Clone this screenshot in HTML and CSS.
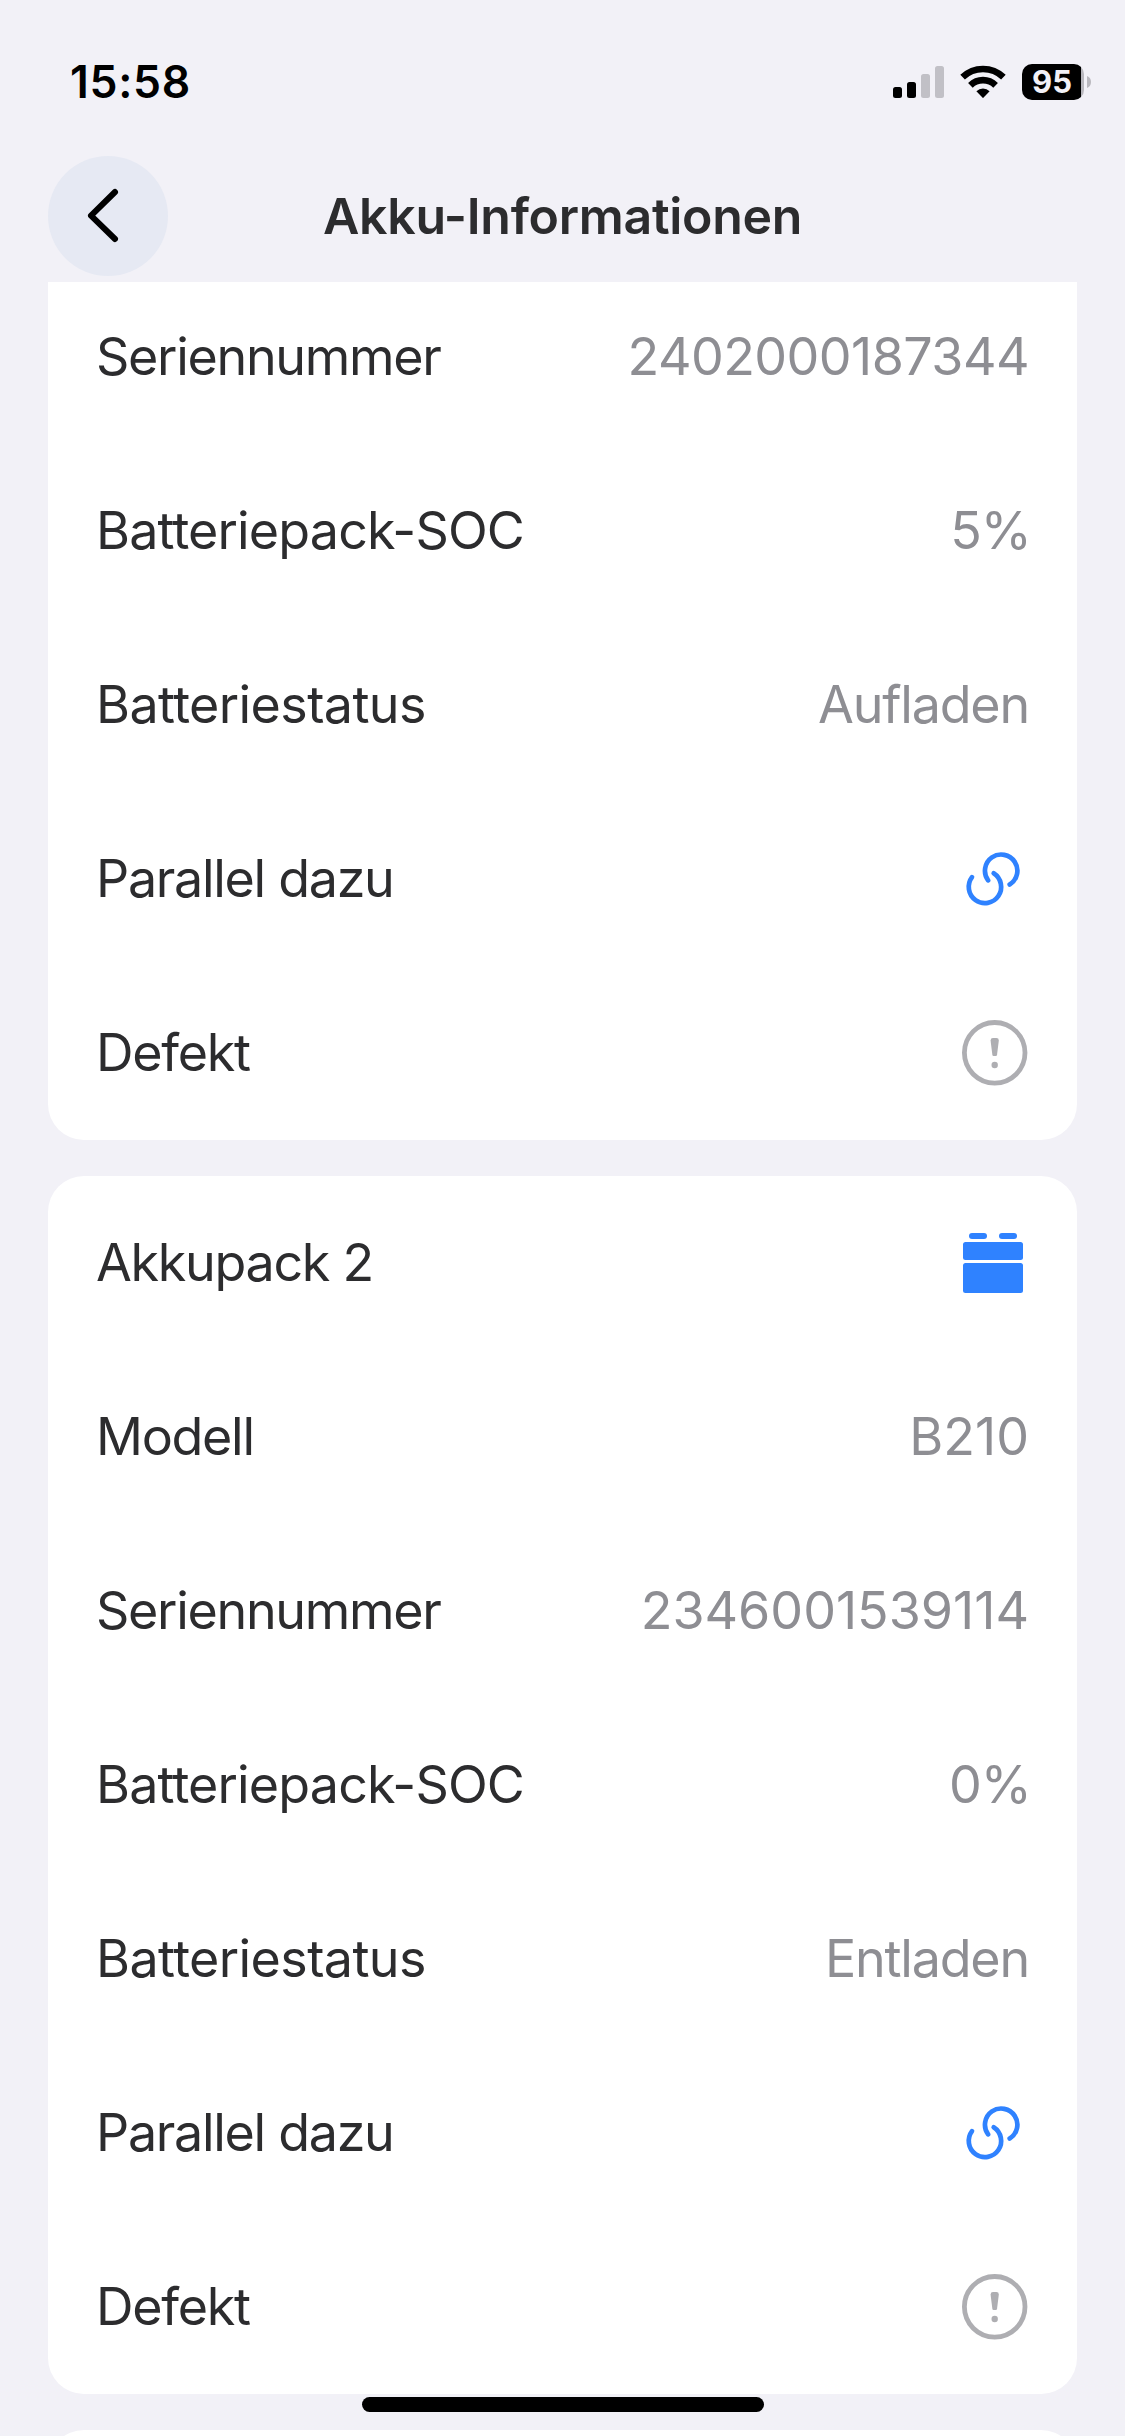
FILE: index.html
```html
<!DOCTYPE html>
<html lang="de">
<head>
<meta charset="utf-8">
<title>Akku-Informationen</title>
<link rel="stylesheet" href="styles.css">
</head>
<body>
<svg width="0" height="0" class="defs" aria-hidden="true">
  <symbol id="link" viewBox="0 0 72 72">
    <g fill="none" stroke="#2f82ff" stroke-width="4.7" stroke-linecap="round">
      <path d="M31.1 37.3A16.2 16.2 0 1 1 52.7 41.5"/>
      <path d="M15 34.2A16.2 16.2 0 1 0 36.7 30.3"/>
    </g>
  </symbol>
  <symbol id="warn" viewBox="0 0 72 72">
    <circle cx="37.7" cy="35.8" r="30.3" fill="none" stroke="#aeaeb2" stroke-width="4.8"/>
    <path d="M33.6 23.4Q33.6 21 36 21h3.4q2.4 0 2.4 2.4l-1.7 14q-.2 1.6-1.3 1.6h-2.2q-1.1 0-1.3-1.6z" fill="#aeaeb2"/>
    <circle cx="37.7" cy="48" r="3.2" fill="#aeaeb2"/>
  </symbol>
  <symbol id="pack" viewBox="0 0 72 72">
    <g fill="#2f82ff">
      <rect x="12" y="6" width="18" height="6" rx="3"/>
      <rect x="42" y="6" width="18" height="6" rx="3"/>
      <rect x="6" y="15" width="60" height="18" rx="2.5"/>
      <rect x="6" y="36" width="60" height="30" rx="2.5"/>
    </g>
  </symbol>
</svg>
<div class="screen">
  <header class="top">
    <div class="status">
      <span class="time">15:58</span>
      <div class="indicators">
        <svg class="signal" width="51" height="32" viewBox="0 0 51 32">
          <rect x="0" y="21" width="9" height="11" rx="2.5"/>
          <rect x="14" y="16" width="9" height="16" rx="2.5"/>
          <rect x="28" y="8" width="9" height="24" rx="2.5" fill="#c1c0c6"/>
          <rect x="42" y="0" width="9" height="32" rx="2.5" fill="#c1c0c6"/>
        </svg>
        <svg class="wifi" width="46" height="34" viewBox="0 0 46 34">
          <g fill="none" stroke="#000" stroke-width="6.6">
            <path d="M2.6 12.2A29.5 29.5 0 0 1 43.4 12.2"/>
            <path d="M10.4 20.3A18 18 0 0 1 35.6 20.3"/>
          </g>
          <path d="M16.4 26.2a9.5 9.5 0 0 1 13.2 0L23.6 32.6q-.6.6-1.2 0z"/>
        </svg>
        <div class="battery"><span class="level">95</span></div>
        <svg class="nub" width="4" height="12" viewBox="0 0 4 12"><path d="M0 0Q4 1.500 4 6T0 12z" fill="#b9b8be"/></svg>
      </div>
    </div>
    <div class="nav">
      <div class="back">
        <svg width="120" height="120" viewBox="0 0 120 120"><path d="M67 36L43 59.7L67 83" fill="none" stroke="#000" stroke-width="6" stroke-linecap="round" stroke-linejoin="round"/></svg>
      </div>
      <h1 class="title">Akku-Informationen</h1>
    </div>
  </header>
  <main class="content">
    <section class="card card-cont">
      <div class="row"><span class="label">Seriennummer</span><span class="value serial">2402000187344</span></div>
      <div class="row"><span class="label soc">Batteriepack-SOC</span><span class="value percent">5%</span></div>
      <div class="row"><span class="label state">Batteriestatus</span><span class="value word">Aufladen</span></div>
      <div class="row"><span class="label">Parallel dazu</span><svg class="icon"><use href="#link"/></svg></div>
      <div class="row"><span class="label">Defekt</span><svg class="icon"><use href="#warn"/></svg></div>
    </section>
    <section class="card">
      <div class="row"><span class="label">Akkupack 2</span><svg class="icon"><use href="#pack"/></svg></div>
      <div class="row"><span class="label">Modell</span><span class="value">B210</span></div>
      <div class="row"><span class="label">Seriennummer</span><span class="value">2346001539114</span></div>
      <div class="row"><span class="label soc">Batteriepack-SOC</span><span class="value percent">0%</span></div>
      <div class="row"><span class="label state">Batteriestatus</span><span class="value word">Entladen</span></div>
      <div class="row"><span class="label">Parallel dazu</span><svg class="icon"><use href="#link"/></svg></div>
      <div class="row"><span class="label">Defekt</span><svg class="icon"><use href="#warn"/></svg></div>
    </section>
    <section class="card card-next"></section>
  </main>
  <div class="home"></div>
</div>
</body>
</html>
```
FILE: styles.css
```css
* { box-sizing: border-box; }
body { margin: 0; background: #f2f1f7; font-family: Inter, "Liberation Sans", sans-serif; }
.defs { position: absolute; }
.screen { position: relative; width: 1125px; height: 2436px; overflow: hidden; display: flex; flex-direction: column; }
.top { height: 282px; flex: none; }
.status { height: 156px; padding: 52px 34px 0 70px; display: flex; justify-content: space-between; align-items: flex-start; }
.time { font-size: 44.5px; line-height: 60px; font-weight: 600; letter-spacing: 0.7px; }
.indicators { display: flex; align-items: flex-start; padding-top: 12px; }
.signal { margin: 2px 16px 0 0; }
.wifi { margin: 1px 16px 0 0; }
.battery { width: 62px; height: 36px; border-radius: 10px; background: linear-gradient(90deg, #000 59px, #b9b8be 59px); display: flex; align-items: center; justify-content: center; padding-right: 2px; }
.level { color: #f2f1f7; font-size: 31px; line-height: 36px; font-weight: 700; }
.nub { margin: 12px 0 0 3px; }
.nav { height: 120px; padding: 0 48px; display: grid; grid-template-columns: 120px 1fr 120px; align-items: center; }
.back { width: 120px; height: 120px; border-radius: 50%; background: #e6e9f3; }
.back svg { display: block; }
.title { margin: 0; text-align: center; font-size: 50px; line-height: 60px; font-weight: 600; letter-spacing: -0.3px; color: #2c2c2e; white-space: nowrap; }
.content { flex: 1; overflow: hidden; display: flex; flex-direction: column; gap: 36px; padding: 0 48px; }
.card { flex: none; background: #fff; border-radius: 36px; }
.card-cont { border-radius: 0 0 36px 36px; margin-top: -12px; }
.card-next { height: 174px; }
.row { height: 174px; padding: 0 48px; display: flex; align-items: center; justify-content: space-between; font-size: 52px; line-height: 72px; white-space: nowrap; }
.label { color: #2c2c2e; letter-spacing: -1.3px; }
.soc { letter-spacing: -0.85px; }
.state { letter-spacing: -0.6px; }
.value { color: #8e8e93; }
.serial { letter-spacing: -0.55px; }
.percent { margin-right: -2px; letter-spacing: -0.9px; }
.word { letter-spacing: -1.2px; }
.icon { width: 72px; height: 72px; }
.home { position: absolute; left: 362px; top: 2397px; width: 402px; height: 15px; border-radius: 8px; background: #000; }
```
